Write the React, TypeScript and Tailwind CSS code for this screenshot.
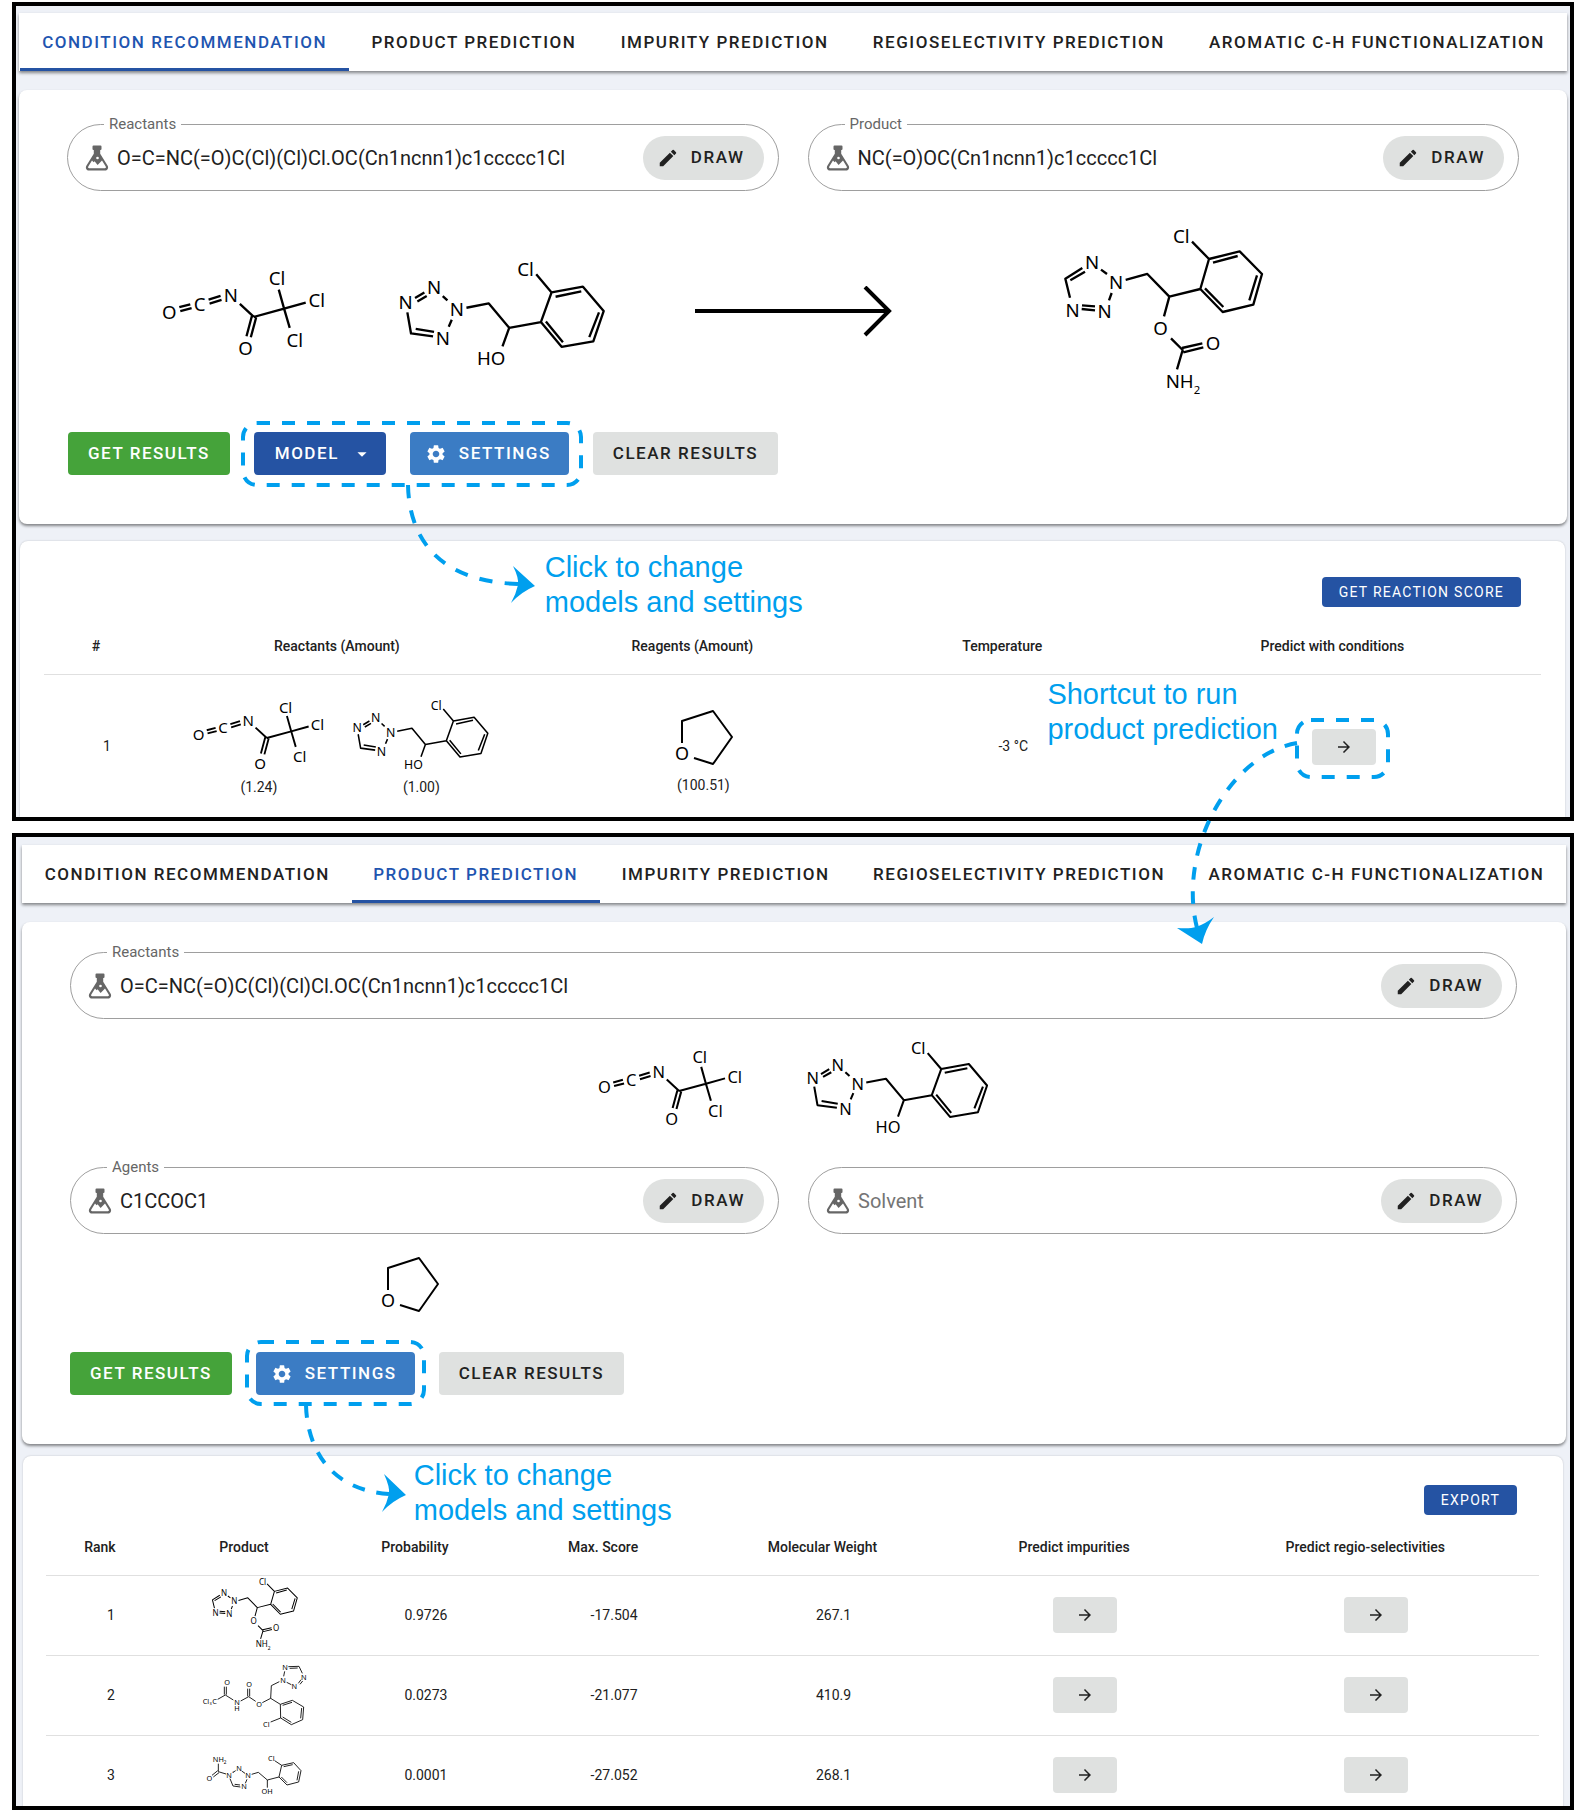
import { useId } from 'react';
import type { ReactNode } from 'react';
import { MdArrowDropDown, MdArrowForward, MdEdit, MdSettings } from 'react-icons/md';

const TABS = [
  'Condition Recommendation',
  'Product Prediction',
  'Impurity Prediction',
  'Regioselectivity Prediction',
  'Aromatic C-H Functionalization',
];

/* ---------- molecule drawings ---------- */

type Atom = [label: string, x: number, y: number, size?: number];

function Molecule({
  name,
  viewBox,
  bonds,
  atoms,
  size,
  stroke,
  className,
}: {
  name: string;
  viewBox: string;
  bonds: string;
  atoms: Atom[];
  size: number;
  stroke: number;
  className: string;
}) {
  return (
    <svg role="img" aria-label={name} viewBox={viewBox} className={`${className} overflow-visible`}>
      <path d={bonds} fill="none" stroke="#000" strokeWidth={stroke} strokeLinejoin="round" />
      <g fontFamily="'Noto Sans', 'Open Sans', sans-serif" fill="#000" textAnchor="middle">
        {atoms.map(([label, x, y, s = size], i) => (
          <text key={i} x={x} y={y + s * 0.36} fontSize={s}>
            {label}
          </text>
        ))}
      </g>
    </svg>
  );
}

function Isocyanate({ className }: { className: string }) {
  return (
    <Molecule
      name="Trichloroacetyl isocyanate"
      className={className}
      viewBox="62 170 496 284"
      size={56}
      stroke={7}
      bonds="M117 294L150 285M120 306L154 297M205 271L241 260M208 283L244 272M299 284L341 323M335 321L319 381M348 325L332 384M341 323L432 298M416 241L432 298L449 356M432 298L497 280"
      atoms={[
        ['O', 87, 310],
        ['C', 178, 285],
        ['N', 272, 257],
        ['Cl', 411, 208],
        ['Cl', 530, 274],
        ['Cl', 464, 392],
        ['O', 316, 418],
      ]}
    />
  );
}

function TetrazoleAlcohol({ className }: { className: string }) {
  return (
    <Molecule
      name="Tetrazolyl chlorophenyl ethanol"
      className={className}
      viewBox="774 140 626 346"
      size={56}
      stroke={7}
      bonds="M825 266L853 249M832 276L860 260M908 260L922 273M935 331L926 352M802 309L813 372L879 381M827 358L882 367M979 295L1046 282L1107 355L1087 411M1107 355L1202 338L1234 249L1328 232L1390 305L1359 396L1264 412L1202 338M1246 262L1323 246M1376 309L1347 383M1217 336L1268 398M1188 195L1234 249"
      atoms={[
        ['N', 797, 279],
        ['N', 882, 235],
        ['N', 950, 300],
        ['N', 908, 386],
        ['Cl', 1156, 179],
        ['HO', 1053, 447],
      ]}
    />
  );
}

function Carbamate({ className }: { className: string }) {
  return (
    <Molecule
      name="Carbamate product"
      className={className}
      viewBox="185 84 612 508"
      size={56}
      stroke={7}
      bonds="M209 293L195 236L246 204M210 241L254 215M302 209L320 222M334 279L326 301M245 316L284 319M244 327L284 331M376 240L441 222L507 290L491 349M507 290L600 267L626 177L718 154L785 222L759 314L667 336L600 267M638 188L712 168M770 226L747 301M614 265L669 321M575 125L626 177M512 415L547 450L530 508M545 444L606 430M549 457L609 442"
      atoms={[
        ['N', 275, 187],
        ['N', 347, 247],
        ['N', 313, 335],
        ['N', 217, 330],
        ['Cl', 543, 110],
        ['O', 481, 385],
        ['O', 638, 430],
        ['NH', 538, 545],
        ['2', 590, 570, 34],
      ]}
    />
  );
}

function Thf({ className }: { className: string }) {
  return (
    <Molecule
      name="Tetrahydrofuran"
      className={className}
      viewBox="670 706 66 62"
      size={18}
      stroke={2}
      bonds="M682 742V720L713 710L732 736L713 763L694 757"
      atoms={[['O', 682, 753]]}
    />
  );
}

function AcylCarbamate({ className }: { className: string }) {
  return (
    <Molecule
      name="Acyl carbamate product"
      className={className}
      viewBox="66 306 324 198"
      size={22}
      stroke={2.6}
      bonds="M116 418L139 405L163 420M136 404V380M142 404V380M185 423L209 410L230 424M206 409V386M212 409V386M250 428L275 415L277 377L301 365M314 349L317 334M328 320L360 319L370 340M332 325L356 324M366 359L358 370M371 363L363 373M337 374L323 367M275 415L304 433L340 421L374 441L371 479L337 494L305 474L304 433M311 436L339 427M368 444L365 475M337 487L311 471M305 474L275 486"
      atoms={[
        ['O', 144, 368],
        ['Cl', 81, 423],
        ['3', 95, 432, 12],
        ['C', 107, 423],
        ['N', 174, 426],
        ['H', 174, 446],
        ['O', 210, 373],
        ['O', 240, 432],
        ['N', 312, 360],
        ['N', 318, 322],
        ['N', 374, 351],
        ['N', 346, 378],
        ['Cl', 262, 492],
      ]}
    />
  );
}

function TetrazoliumAmide({ className }: { className: string }) {
  return (
    <Molecule
      name="Tetrazolium amide product"
      className={className}
      viewBox="66 590 324 122"
      size={22}
      stroke={2.6}
      bonds="M118 616V640L141 647M116 637L99 651M120 643L103 656M162 642L170 637M188 638L198 645M204 663L199 675M184 686L162 683L153 661M183 680L167 678M218 648L238 642L265 665V688M265 665L300 656L308 621L344 613L366 637L359 671L324 680L300 656M314 625L341 619M359 639L354 666M324 673L307 656M287 607L308 621"
      atoms={[
        ['NH', 118, 604],
        ['2', 138, 612, 14],
        ['O', 91, 661],
        ['N', 150, 650],
        ['+', 162, 640, 12],
        ['N', 180, 631],
        ['N', 207, 652],
        ['N', 195, 685],
        ['OH', 264, 700],
        ['Cl', 277, 599],
      ]}
    />
  );
}

/* ---------- controls ---------- */

function FlaskIcon() {
  return (
    <svg viewBox="0 0 24 26" className="h-[26px] w-6 shrink-0" aria-hidden="true">
      <path
        fill="#666"
        fillRule="evenodd"
        d="M8.500 0.500h7a1 1 0 0 1 1 1v2.500a1 1 0 0 1-1 1h-.3v3.800l7.300 11.700c1.400 2.300.3 5-2.300 5H3.800c-2.600 0-3.700-2.700-2.300-5L8.800 8.800V5h-.3a1 1 0 0 1-1-1V1.500a1 1 0 0 1 1-1zM7 15.500L3.300 21.600c-.5.900-.1 1.700.9 1.700h15.600c1 0 1.400-.8.9-1.700L17 15.500l-4.400 4.400-3-3.600-1 1z"
      />
      <circle cx="12.500" cy="13" r="1.300" fill="#fff" />
    </svg>
  );
}

function Field({
  label,
  value,
  placeholder,
}: {
  label?: string;
  value?: string;
  placeholder?: string;
}) {
  const id = useId();
  return (
    <fieldset
      className={
        label
          ? 'min-w-0 rounded-[34px] border border-[#9e9e9e] pt-0.5 pr-[14px] pb-2.5 pl-[17px]'
          : 'mt-[10px] min-w-0 rounded-[34px] border border-[#9e9e9e] pt-[11px] pr-[14px] pb-2.5 pl-[17px]'
      }
    >
      {label && (
        <legend className="ml-[19px] h-5 px-[5px] text-[15px] leading-5 text-[#666]">
          <label htmlFor={id}>{label}</label>
        </legend>
      )}
      <div className="flex items-center">
        <FlaskIcon />
        <input
          id={id}
          aria-label={label ? undefined : placeholder}
          defaultValue={value}
          placeholder={placeholder}
          className="ml-2 min-w-0 flex-1 bg-transparent text-[20px] text-[#212121] outline-none placeholder:text-[#757575]"
        />
        <button
          type="button"
          className="flex h-11 items-center gap-3 rounded-full bg-[#dfe1e0] pr-[19px] pl-[14px] text-[17px] font-medium tracking-[0.09em] text-[#212121]"
        >
          <MdEdit className="size-[22px]" />
          DRAW
        </button>
      </div>
    </fieldset>
  );
}

function Button({ tone, children }: { tone: 'green' | 'navy' | 'blue' | 'grey'; children: ReactNode }) {
  const tones = {
    green: 'bg-[#45a33a] text-white px-5',
    navy: 'bg-[#2553a3] text-white pl-[21px] pr-[13px]',
    blue: 'bg-[#3b7cc4] text-white pl-[15px] pr-[18px]',
    grey: 'bg-[#dfe1e0] text-[#212121] px-5',
  };
  return (
    <button
      type="button"
      className={`${tones[tone]} flex h-[43px] items-center rounded text-[17px] font-medium tracking-[0.09em] whitespace-nowrap`}
    >
      {children}
    </button>
  );
}

function SettingsButton() {
  return (
    <Button tone="blue">
      <MdSettings className="mr-3 size-[22px]" />
      SETTINGS
    </Button>
  );
}

function SmallButton({ children }: { children: ReactNode }) {
  return (
    <button
      type="button"
      className="h-[30px] rounded bg-[#2553a3] px-[17px] text-[14px] tracking-[0.09em] text-white"
    >
      {children}
    </button>
  );
}

function ArrowButton({ label }: { label: string }) {
  return (
    <button
      type="button"
      aria-label={label}
      className="flex h-9 w-16 items-center justify-center rounded bg-[#dfe1e0] text-[#212121]"
    >
      <MdArrowForward className="size-[18px]" />
    </button>
  );
}

function TabBar({ active }: { active: number }) {
  return (
    <nav className="relative flex bg-white pl-px shadow-[0_2px_3px_rgba(0,0,0,0.45)]">
      {TABS.map((tab, i) => (
        <a
          key={tab}
          href="#"
          aria-current={i === active ? 'page' : undefined}
          className={`${
            i === active ? 'border-[#2553a3] text-[#1f55b0]' : 'border-transparent text-[#212121]'
          } flex h-[58px] grow items-center justify-center border-b-3 pt-[5px] text-[17px] font-medium tracking-[0.09em] whitespace-nowrap uppercase`}
        >
          {tab}
        </a>
      ))}
    </nav>
  );
}

/* ---------- annotations ---------- */

function Callout({
  box,
  curve,
  dashes,
  head,
  className,
}: {
  box: { width: number; height: number };
  curve: string;
  dashes: number;
  head: string;
  className: string;
}) {
  return (
    <svg
      aria-hidden="true"
      className={`${className} pointer-events-none absolute z-20 overflow-visible`}
      width={box.width}
      height={box.height}
    >
      <g fill="none" stroke="#009fee" strokeWidth="4" strokeDasharray="13 12">
        <rect width={box.width} height={box.height} rx="14" />
        {/* the path length is set so that the line both starts and ends on a full dash */}
        <path d={curve} pathLength={dashes * 25 - 12} />
      </g>
      <path d={head} fill="#009fee" />
    </svg>
  );
}

function CalloutText({ className, children }: { className: string; children: ReactNode }) {
  return (
    <p
      className={`${className} pointer-events-none absolute z-20 text-left font-['Liberation_Sans',Arial,sans-serif] text-[29px] leading-[35px] font-normal whitespace-nowrap text-[#009fee]`}
    >
      {children}
    </p>
  );
}

/* ---------- tables ---------- */

function HeaderRow({ columns }: { columns: [string, string][] }) {
  return (
    <thead>
      <tr className="h-14 border-b border-[#e0e0e0]">
        {columns.map(([title, width]) => (
          <th key={title} scope="col" className={`${width} pt-0.5 pr-[22px] font-medium`}>
            {title}
          </th>
        ))}
      </tr>
    </thead>
  );
}

const PRODUCTS = [
  { probability: '0.9726', score: '-17.504', weight: '267.1', drawing: <Carbamate className="mx-auto w-[88px]" /> },
  { probability: '0.0273', score: '-21.077', weight: '410.9', drawing: <AcylCarbamate className="mx-auto w-[108px]" /> },
  { probability: '0.0001', score: '-27.052', weight: '268.1', drawing: <TetrazoliumAmide className="mx-auto w-[108px]" /> },
];

function ConditionPanel() {
  return (
    <section className="border-4 border-black bg-[#eef1f7] px-[3px] pt-[7px]">
      <TabBar active={0} />
      <div className="mt-[19px] rounded-lg bg-white px-12 pt-6 pb-[49px] shadow-[0_2px_3px_rgba(0,0,0,0.45)]">
        <div className="grid grid-cols-2 gap-[29px]">
          <Field label="Reactants" value="O=C=NC(=O)C(Cl)(Cl)Cl.OC(Cn1ncnn1)c1ccccc1Cl" />
          <Field label="Product" value="NC(=O)OC(Cn1ncnn1)c1ccccc1Cl" />
        </div>
        <div className="grid h-[241px] grid-cols-[1fr_auto_1fr] items-center">
          <div className="flex items-center justify-center gap-[72px] pt-1 pl-1.5">
            <Isocyanate className="w-[165px]" />
            <TetrazoleAlcohol className="w-[209px]" />
          </div>
          <svg viewBox="0 0 198 52" className="w-[198px]" aria-hidden="true">
            <path d="M1 25H195M171 1L195 25L171 49" fill="none" stroke="#000" strokeWidth="4" />
          </svg>
          <div className="flex justify-center pt-0.5 pr-[84px]">
            <Carbamate className="w-[204px]" />
          </div>
        </div>
        <div className="flex gap-6 pl-px">
          <Button tone="green">GET RESULTS</Button>
          <div className="relative flex gap-6">
            <Button tone="navy">
              MODEL
              <MdArrowDropDown className="ml-3 size-[22px]" />
            </Button>
            <SettingsButton />
            <Callout
              className="-top-[9px] -left-[11px]"
              box={{ width: 338, height: 62 }}
              curve="M165 62C166 110 190 158 275 161"
              dashes={7}
              head="M292 163L270 143Q276 155 275 162Q273 171 268 180Q278 169 292 163Z"
            />
            <CalloutText className="top-[118px] left-[291px]">
              Click to change
              <br />
              models and settings
            </CalloutText>
          </div>
          <Button tone="grey">CLEAR RESULTS</Button>
        </div>
      </div>

      <div className="mt-[17px] mr-0.5 ml-px rounded-t-lg bg-white px-6 pt-9 shadow-[0_0_2px_rgba(0,0,0,0.2)]">
        <div className="mr-5 mb-[11px] flex justify-end">
          <SmallButton>GET REACTION SCORE</SmallButton>
        </div>
        <table className="w-full table-fixed border-collapse text-center text-[14px] text-[#212121]">
          <HeaderRow
            columns={[
              ['#', 'w-[8.4%]'],
              ['Reactants (Amount)', 'w-[23.8%]'],
              ['Reagents (Amount)', 'w-[23.7%]'],
              ['Temperature', 'w-[17.7%]'],
              ['Predict with conditions', 'w-[26.4%]'],
            ]}
          />
          <tbody>
            <tr className="h-[143px]">
              <td className="pt-0.5">1</td>
              <td>
                <div className="flex items-end justify-center gap-[27px] pt-1 pr-[13px]">
                  <div className="flex flex-col items-center gap-1">
                    <Isocyanate className="w-[133px]" />
                    <span>(1.24)</span>
                  </div>
                  <div className="flex flex-col items-center gap-1">
                    <TetrazoleAlcohol className="w-[138px]" />
                    <span>(1.00)</span>
                  </div>
                </div>
              </td>
              <td>
                <div className="flex flex-col items-center gap-1.5 pt-3">
                  <Thf className="w-[66px]" />
                  <span>(100.51)</span>
                </div>
              </td>
              <td className="pt-0.5">-3 °C</td>
              <td className="pt-0.5 pl-0.5">
                <div className="relative mx-auto w-16">
                  <ArrowButton label="Predict product with conditions" />
                  <Callout
                    className="-top-[9px] -left-[15px]"
                    box={{ width: 91, height: 57 }}
                    curve="M0 23C-66 34 -120 128 -100 208"
                    dashes={10}
                    head="M-95 224L-120 208Q-107 209 -101 207Q-92 204 -83 197Q-92 210 -95 224Z"
                  />
                  <CalloutText className="-top-[52px] -left-[265px]">
                    Shortcut to run
                    <br />
                    product prediction
                  </CalloutText>
                </div>
              </td>
            </tr>
          </tbody>
        </table>
      </div>
    </section>
  );
}

function ProductPanel() {
  return (
    <section className="mt-3 overflow-hidden border-4 border-black bg-[#eef1f7] pt-2 pr-1 pl-1.5">
      <TabBar active={1} />
      <div className="mt-[19px] rounded-lg bg-white pt-5 pr-[49px] pb-[49px] pl-12 shadow-[0_2px_3px_rgba(0,0,0,0.45)]">
        <Field label="Reactants" value="O=C=NC(=O)C(Cl)(Cl)Cl.OC(Cn1ncnn1)c1ccccc1Cl" />
        <div className="flex h-[138px] items-center justify-center gap-[63px]">
          <Isocyanate className="w-[146px]" />
          <TetrazoleAlcohol className="w-[184px]" />
        </div>
        <div className="grid grid-cols-2 gap-x-[29px]">
          <Field label="Agents" value="C1CCOC1" />
          <Field placeholder="Solvent" />
          <div className="flex h-[118px] items-center justify-center pr-8 pb-4">
            <Thf className="w-[66px]" />
          </div>
        </div>
        <div className="flex gap-6">
          <Button tone="green">GET RESULTS</Button>
          <div className="relative">
            <SettingsButton />
            <Callout
              className="-top-[10px] -left-[9px]"
              box={{ width: 177, height: 62 }}
              curve="M59 63C60 105 82 148 142 152"
              dashes={6}
              head="M159 153L137 132Q143 145 142 152Q140 161 135 170Q145 159 159 153Z"
            />
            <CalloutText className="top-[106px] left-[158px]">
              Click to change
              <br />
              models and settings
            </CalloutText>
          </div>
          <Button tone="grey">CLEAR RESULTS</Button>
        </div>
      </div>

      <div className="mt-3 mr-[3px] -mb-2.5 ml-px rounded-t-lg bg-white pt-[29px] pr-6 pl-[23px] shadow-[0_0_2px_rgba(0,0,0,0.2)]">
        <div className="mr-[22px] mb-1 flex justify-end">
          <SmallButton>EXPORT</SmallButton>
        </div>
        <table className="w-full table-fixed border-collapse text-center text-[14px] text-[#212121]">
          <HeaderRow
            columns={[
              ['Rank', 'w-[8.7%]'],
              ['Product', 'w-[10.6%]'],
              ['Probability', 'w-[12.3%]'],
              ['Max. Score', 'w-[12.9%]'],
              ['Molecular Weight', 'w-[16.5%]'],
              ['Predict impurities', 'w-[17.2%]'],
              ['Predict regio-selectivities', 'w-[21.8%]'],
            ]}
          />
          <tbody>
            {PRODUCTS.map((product, i) => (
              <tr key={product.weight} className="h-20 border-b border-[#e0e0e0]">
                <td>{i + 1}</td>
                <td>{product.drawing}</td>
                <td>{product.probability}</td>
                <td>{product.score}</td>
                <td>{product.weight}</td>
                <td>
                  <div className="flex justify-center">
                    <ArrowButton label="Predict impurities" />
                  </div>
                </td>
                <td>
                  <div className="flex justify-center">
                    <ArrowButton label="Predict regio-selectivities" />
                  </div>
                </td>
              </tr>
            ))}
          </tbody>
        </table>
      </div>
    </section>
  );
}

export default function App() {
  return (
    <main className="bg-white px-3 py-0.5 font-[Roboto,sans-serif]">
      <ConditionPanel />
      <ProductPanel />
    </main>
  );
}
